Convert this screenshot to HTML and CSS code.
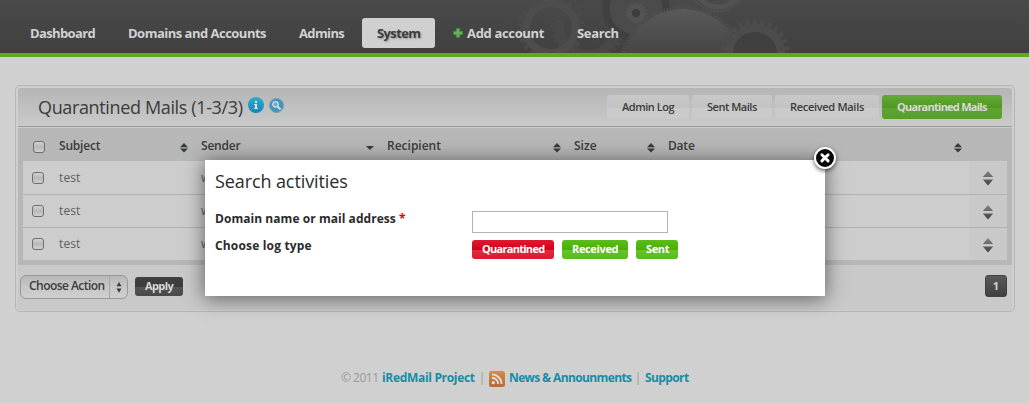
FILE: index.html
```html
<!DOCTYPE html>
<html lang="en">
<head>
<meta charset="utf-8">
<title>Quarantined Mails</title>
<link rel="stylesheet" href="styles.css">
</head>
<body>
<svg class="defs" width="0" height="0" aria-hidden="true">
  <defs>
    <linearGradient id="metal" x1="0" y1="0" x2="0" y2="1"><stop offset="0" stop-color="#595959"/><stop offset=".4" stop-color="#444"/><stop offset="1" stop-color="#444"/></linearGradient>
    <linearGradient id="arrow" x1="0" y1="0" x2="0" y2="1"><stop offset="0" stop-color="#858585"/><stop offset="1" stop-color="#414141"/></linearGradient>
    <linearGradient id="blue" x1="0" y1="0" x2="0" y2="1"><stop offset="0" stop-color="#2cadd0"/><stop offset="1" stop-color="#1685b8"/></linearGradient>
    <linearGradient id="orange" x1="0" y1="0" x2="0" y2="1"><stop offset="0" stop-color="#d18f45"/><stop offset="1" stop-color="#bd6537"/></linearGradient>
    <symbol id="sort" viewBox="0 0 8 10"><path d="M4 0 8 4.3H0ZM0 5.6H8L4 9.6Z" fill="#343c3c"/></symbol>
    <symbol id="move" viewBox="0 0 12 15"><path d="M6 0 11.2 6H.8ZM.8 8.4H11.2L6 14.4Z" fill="url(#arrow)"/></symbol>
  </defs>
</svg>

<header class="header">
  <svg class="gears" width="290" height="53" viewBox="510 0 290 53">
    <circle cx="588" cy="26" r="29" stroke="#484848" stroke-width="10"/>
    <circle cx="588" cy="26" r="35" stroke="#484848" stroke-width="4" pathLength="76" stroke-dasharray="1 1"/>
    <circle cx="551" cy="28" r="25" stroke="#4d4d4d" stroke-width="8"/>
    <circle cx="551" cy="28" r="31" stroke="#4b4b4b" stroke-width="5" pathLength="52" stroke-dasharray="1 1"/>
    <circle cx="636" cy="8" r="30" fill="#4b4b4b" stroke="#404040" stroke-width="7"/>
    <circle cx="636" cy="13" r="6.5" stroke="#535353" stroke-width="6"/>
    <circle cx="636" cy="13" r="10" stroke="#535353" stroke-width="2" pathLength="36" stroke-dasharray="1 1"/>
    <circle cx="636" cy="13" r="4" fill="#3c3c3c"/>
    <circle cx="718" cy="-16" r="23" stroke="#535353" stroke-width="5"/>
    <circle cx="718" cy="-16" r="27.5" stroke="#535353" stroke-width="3" pathLength="120" stroke-dasharray="1 1"/>
    <circle cx="683" cy="70" r="61" fill="url(#metal)"/>
    <circle cx="683" cy="70" r="62.5" stroke="#515151" stroke-width="3" pathLength="260" stroke-dasharray="1 1"/>
    <circle cx="755" cy="54" r="26" stroke="#4c4c4c" stroke-width="8"/>
    <circle cx="755" cy="54" r="32" stroke="#4c4c4c" stroke-width="6" pathLength="54" stroke-dasharray="1 1"/>
    <circle cx="755" cy="54" r="22" fill="#404040"/>
  </svg>
  <nav class="nav">
    <a class="w95"><span class="t1">Dashboard</span></a>
    <a class="w168"><span class="t2">Domains and Accounts</span></a>
    <a class="w75"><span class="t1">Admins</span></a>
    <a class="w73 current"><span class="t1">System</span></a>
    <a class="w121"><svg class="plus" width="10" height="10" viewBox="0 0 10 10"><path d="M3.3.5h3.4v2.8h2.8v3.4H6.7v2.8H3.3V6.7H.5V3.3h2.8Z" fill="#62b15c" stroke="#3d8b3a" stroke-width=".8"/></svg><span class="t5">Add account</span></a>
    <a class="w75"><span class="t5">Search</span></a>
  </nav>
</header>

<main class="panel">
  <div class="panel-head">
    <h2>Quarantined Mails (1-3/3)</h2>
    <svg class="info" width="16" height="16" viewBox="0 0 16 16"><circle cx="8" cy="8" r="8" fill="url(#blue)"/><path d="M6 7h3v4h1v1H6v-1h1V8H6ZM7 4h2v2H7Z" fill="#dce6e8"/></svg>
    <svg class="find" width="15" height="15" viewBox="0 0 15 15"><circle cx="7.5" cy="7.5" r="7" fill="#4793b9" stroke="#6ea1b6"/><circle cx="6.5" cy="6.3" r="2.7" fill="#69a9c8" stroke="#d0dde2" stroke-width="1.3"/><path d="m8.6 8.5 3 3" stroke="#d0dde2" stroke-width="1.8"/></svg>
    <div class="tabs">
      <a class="w82"><span class="b1">Admin Log</span></a>
      <a class="w80"><span class="b1">Sent Mails</span></a>
      <a class="w104"><span class="b3">Received Mails</span></a>
      <a class="w120 on"><span class="b4">Quarantined Mails</span></a>
    </div>
  </div>

  <div class="table">
    <div class="row thead">
      <i class="check"></i>
      <div class="th"><span class="h1">Subject</span><svg width="8" height="10"><use href="#sort"/></svg></div>
      <div class="th"><span class="h1">Sender</span><svg width="8" height="10" viewBox="0 0 8 10"><path d="M0 3h8L4 7Z" fill="#343c3c"/></svg></div>
      <div class="th"><span>Recipient</span><svg width="8" height="10"><use href="#sort"/></svg></div>
      <div class="th"><span>Size</span><svg width="8" height="10"><use href="#sort"/></svg></div>
      <div class="th"><span class="h1">Date</span><svg class="last" width="8" height="10"><use href="#sort"/></svg></div>
    </div>
    <div class="row first"><i class="check"></i><div class="td">test</div><div class="td">w</div><div class="handle"><svg width="12" height="15"><use href="#move"/></svg></div></div>
    <div class="row"><i class="check"></i><div class="td">test</div><div class="td">w</div><div class="handle"><svg width="12" height="15"><use href="#move"/></svg></div></div>
    <div class="row"><i class="check"></i><div class="td">test</div><div class="td">w</div><div class="handle"><svg width="12" height="15"><use href="#move"/></svg></div></div>
  </div>

  <div class="actions">
    <div class="select"><span>Choose Action</span><b><svg width="6" height="11" viewBox="0 0 6 11"><path d="M3 0 5.5 4.3H.5ZM.5 6.5h5L3 10.8Z" fill="#3c3c3c"/></svg></b></div>
    <a class="apply"><span>Apply</span></a>
    <a class="page">1</a>
  </div>
</main>

<footer class="footer">
  <span class="f1">© 2011</span><a class="f2">iRedMail Project</a><i>|</i>
  <svg width="16" height="16" viewBox="0 0 16 16"><rect width="16" height="16" rx="2.5" fill="url(#orange)"/><circle cx="4.3" cy="11.7" r="1.6" fill="#ddd"/><path d="M3 6.8a6.2 6.2 0 0 1 6.2 6.2M3 3.4A9.6 9.6 0 0 1 12.6 13" fill="none" stroke="#ddd" stroke-width="1.9"/></svg>
  <a class="f3">News &amp; Announments</a><i>|</i><a class="f4">Support</a>
</footer>

<section class="dialog">
  <h3>Search activities</h3>
  <div class="field"><label class="l1">Domain name or mail address <em>*</em></label><input type="text" aria-label="Domain name or mail address"></div>
  <div class="field types"><label class="l2">Choose log type</label>
    <a class="pill red"><span class="p1">Quarantined</span></a><a class="pill w66"><span>Received</span></a><a class="pill w42"><span>Sent</span></a>
  </div>
  <svg class="close" width="28" height="28" viewBox="0 0 28 28"><circle cx="14" cy="13" r="10" fill="#080808" stroke="#fff" stroke-width="2"/><path d="m10.9 9.7 6.2 6.2m0-6.2-6.2 6.2" stroke="#fff" stroke-width="2.9" stroke-linecap="round"/></svg>
</section>
</body>
</html>
```
FILE: styles.css
```css
* { box-sizing: border-box; }
body { margin: 0; height: 403px; position: relative; overflow: hidden; background: #d0d0d0; color: #3b3b3b; font: 12px/16px "Open Sans", "Noto Sans", sans-serif; }
span, h2, h3, label, a { white-space: nowrap; }
i, em { font-style: normal; }
svg { display: block; flex: none; }
.defs { position: absolute; }

.header { position: relative; height: 57px; padding: 18px 15px 0; border-bottom: 4px solid #5bab20; background: linear-gradient(#4a4a4a, #404040); }
.gears { position: absolute; left: 510px; top: 0; fill: none; }
.nav { position: relative; display: flex; gap: 3px; }
.nav a { display: flex; align-items: center; height: 30px; padding: 0 0 1px 15px; border-radius: 3px; color: #d2d2d2; font-size: 13px; font-weight: 700; }
.nav .current { background: #d0d0d0; color: #3b3b3b; text-shadow: 1px 1px 2px #999; }
.plus { margin-right: 4px; }
.w95 { width: 95px; } .w168 { width: 168px; } .w75 { width: 75px; } .w73 { width: 73px; } .w121 { width: 121px; }
.t1 { letter-spacing: -.63px; } .t2 { letter-spacing: -.51px; } .t5 { letter-spacing: -.34px; }

.panel { width: 1000px; height: 227px; margin: 28px 0 0 15px; padding: 2px; border: 1px solid #b5b5b5; border-radius: 5px; background: #cfcfcf; }
.panel-head { display: flex; height: 40px; padding: 7px 10px 0 20px; border-bottom: 1px solid #ccc; border-radius: 3px 3px 0 0; background: linear-gradient(#b5b5b5, #cacaca 38px, #999 38px, #999 39px); }
h2 { width: 210px; margin: 0; font-size: 18px; font-weight: 400; line-height: 24px; letter-spacing: -.36px; }
.info { margin-top: 2px; }
.find { margin: 3px 0 0 5px; }
.tabs { display: flex; gap: 3px; margin-left: auto; }
.tabs a { height: 24px; padding-left: 15px; border-radius: 3px; font-size: 11px; font-weight: 600; line-height: 24px; background: linear-gradient(#c8c8c8, #c3c3c3 13px, #cbcbcb 13px, #c9c9c9); }
.tabs .on { color: #d8d8d8; font-weight: 700; background: linear-gradient(#64a83b, #4f991e 13px, #61a334 13px, #559f27); }
.w82 { width: 82px; } .w80 { width: 80px; } .w104 { width: 104px; } .w120 { width: 120px; }
.b1 { letter-spacing: -.48px; } .b3 { letter-spacing: -.3px; } .b4 { letter-spacing: -.75px; }

.table { height: 137px; padding: 0 5px 5px; background: #b7b7b7; }
.row { display: grid; grid-template-columns: 26px 142px 1fr 38px; height: 33px; align-items: center; border-bottom: 1px solid #b1b1b1; background: #cdcdcd; }
.row.first { height: 34px; }
.row:last-child { border: 0; height: 32px; }
.thead { grid-template-columns: 26px 142px 186px 187px 94px 1fr; border: 0; background: none; }
.check { width: 12px; height: 12px; margin-left: 9px; border: 1px solid #6e6e6e; border-radius: 3px; background: linear-gradient(#d2d2d2, #b8b8b8 50%, #d0d0d0); }
.thead .check { margin: 5px 0 0 10px; }
.th { display: flex; justify-content: space-between; align-items: center; padding: 3px 3px 0 10px; font-weight: 600; }
.th svg { margin-top: 3px; }
.th .last { margin-right: 42px; }
.h1 { letter-spacing: -.2px; }
.td { padding-left: 10px; color: #606060; letter-spacing: .1px; }
.handle { display: grid; place-items: center; align-self: stretch; padding-top: 2px; background: #c9c9c9; }

.actions { display: flex; height: 45px; padding: 10px 5px 0 2px; background: #c9c9c9; }
.select { display: flex; width: 108px; height: 24px; border: 1px solid #999; border-radius: 6px; font-weight: 600; line-height: 20px; background: linear-gradient(#b8b8b8, #c7c7c7 50%, #cfcfcf); }
.select span { width: 88px; padding-left: 8px; letter-spacing: -.55px; }
.select b { display: grid; flex: 1; place-items: center; border-left: 1px solid #a5a5a5; }
.apply { width: 48px; height: 19px; margin: 2px 0 0 7px; border-radius: 3px; padding-left: 10px; color: #d8d8d8; font-size: 11px; font-weight: 700; line-height: 18px; letter-spacing: -.6px; background: linear-gradient(#404040, #3c3c3c 10px, #555 10px, #494949); }
.page { width: 22px; height: 22px; margin-left: auto; border: 1px solid #414141; border-radius: 3px; text-align: center; font-size: 11px; font-weight: 700; line-height: 20px; color: #d2d2d2; background: linear-gradient(#5a5a5a, #404040); }

.footer { display: flex; align-items: center; margin: 57px 0 0 341px; color: #999; font-size: 12px; line-height: 18px; }
.footer a { color: #168da5; font-weight: 700; }
.footer i { width: 14px; text-align: center; }
.footer svg { position: relative; top: 1px; margin-right: 4px; }
.f1 { width: 41px; letter-spacing: -.5px; } .f2 { width: 93px; letter-spacing: -.32px; } .f3 { width: 122px; letter-spacing: -.62px; } .f4 { letter-spacing: -.6px; }

.dialog { position: absolute; left: 205px; top: 160px; width: 620px; height: 136px; padding: 9px 10px 0; background: #fff; color: #2b2b2b; box-shadow: 0 2px 18px 1px rgba(0, 0, 0, .5); }
h3 { margin: 0 0 18px; font-size: 18px; font-weight: 400; line-height: 24px; letter-spacing: -.1px; }
.field { display: flex; height: 28px; }
label { width: 257px; font-size: 12px; font-weight: 700; line-height: 15px; }
label em { color: #e00; }
.l1 { letter-spacing: .05px; } .l2 { letter-spacing: .17px; }
.dialog input { width: 196px; height: 22px; padding: 0 4px; border: 1px solid #b3b3b3; background: #fff; }
.types label { line-height: 13px; }
.pill { width: 82px; height: 19px; margin: 1px 8px 0 0; padding-left: 10px; border-radius: 3px; color: #fff; font-size: 11px; font-weight: 700; line-height: 18px; letter-spacing: -.35px; background: linear-gradient(#5bbd1c, #47b000 10px, #67c22b 10px, #58bb17); }
.pill.red { background: linear-gradient(#de1a30, #d20016 10px, #df2b40 10px, #dc182e); }
.p1 { letter-spacing: -.72px; }
.pill.w66 { width: 66px; } .pill.w42 { width: 42px; }
.close { position: absolute; right: -14px; top: -15px; filter: drop-shadow(0 2px 2px rgba(0, 0, 0, .6)); }
```
